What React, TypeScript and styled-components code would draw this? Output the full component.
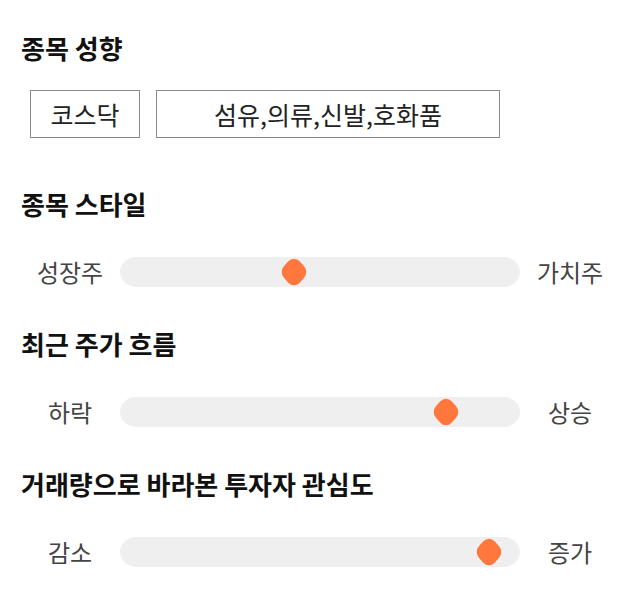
import React from 'react'
import styled, { createGlobalStyle } from 'styled-components'

const GlobalStyle = createGlobalStyle`
  body {
    margin: 0;
    background: #ffffff;
    font-family: 'Noto Sans CJK KR', 'Noto Sans', sans-serif;
  }
`

const Page = styled.div`
  display: flex;
  flex-direction: column;
  width: 600px;
  padding: 33px 20px 20px;
`

const Section = styled.section<{ $gap: number }>`
  display: flex;
  flex-direction: column;
  margin-top: ${(p) => p.$gap}px;
`

const Title = styled.h2`
  margin: 0;
  padding-left: 1px;
  font-size: 26px;
  line-height: 30px;
  font-weight: 700;
  color: #111111;
`

const TagRow = styled.div`
  display: flex;
  gap: 16px;
  margin-top: 27px;
  padding-left: 10px;
`

const Tag = styled.div<{ $width: number }>`
  display: flex;
  align-items: center;
  justify-content: center;
  box-sizing: border-box;
  width: ${(p) => p.$width}px;
  height: 48px;
  border: 1px solid #8a8a8a;
  font-size: 25px;
  color: #222222;
`

const SliderRow = styled.div`
  display: grid;
  grid-template-columns: 100px 1fr 100px;
  align-items: center;
  margin-top: 38px;
`

const SideLabel = styled.span`
  text-align: center;
  font-size: 24px;
  line-height: 30px;
  color: #444444;
`

const Track = styled.div`
  position: relative;
  height: 30px;
  border-radius: 16px / 15px;
  background: #efefef;
`

const Thumb = styled.div`
  position: absolute;
  top: 0;
  width: 28px;
  height: 30px;
  margin-left: -14px;
  display: flex;
  align-items: center;
  justify-content: center;

  &::before {
    content: '';
    width: 22px;
    height: 22px;
    border-radius: 8px;
    background: #ff773d;
    transform: scaleY(1.08) rotate(45deg);
  }
`

const sliders = [
  { title: '종목 스타일', left: '성장주', right: '가치주', pos: 0.435, gap: 51 },
  { title: '최근 주가 흐름', left: '하락', right: '상승', pos: 0.815, gap: 42 },
  { title: '거래량으로 바라본 투자자 관심도', left: '감소', right: '증가', pos: 0.922, gap: 42 },
]

export default function App() {
  return (
    <>
      <GlobalStyle />
      <Page>
        <Section $gap={0}>
          <Title>종목 성향</Title>
          <TagRow>
            <Tag $width={110}>코스닥</Tag>
            <Tag $width={344}>섬유,의류,신발,호화품</Tag>
          </TagRow>
        </Section>

        {sliders.map((s) => (
          <Section key={s.title} $gap={s.gap}>
            <Title>{s.title}</Title>
            <SliderRow>
              <SideLabel>{s.left}</SideLabel>
              <Track>
                <Thumb style={{ left: `${s.pos * 100}%` }} />
              </Track>
              <SideLabel>{s.right}</SideLabel>
            </SliderRow>
          </Section>
        ))}
      </Page>
    </>
  )
}
